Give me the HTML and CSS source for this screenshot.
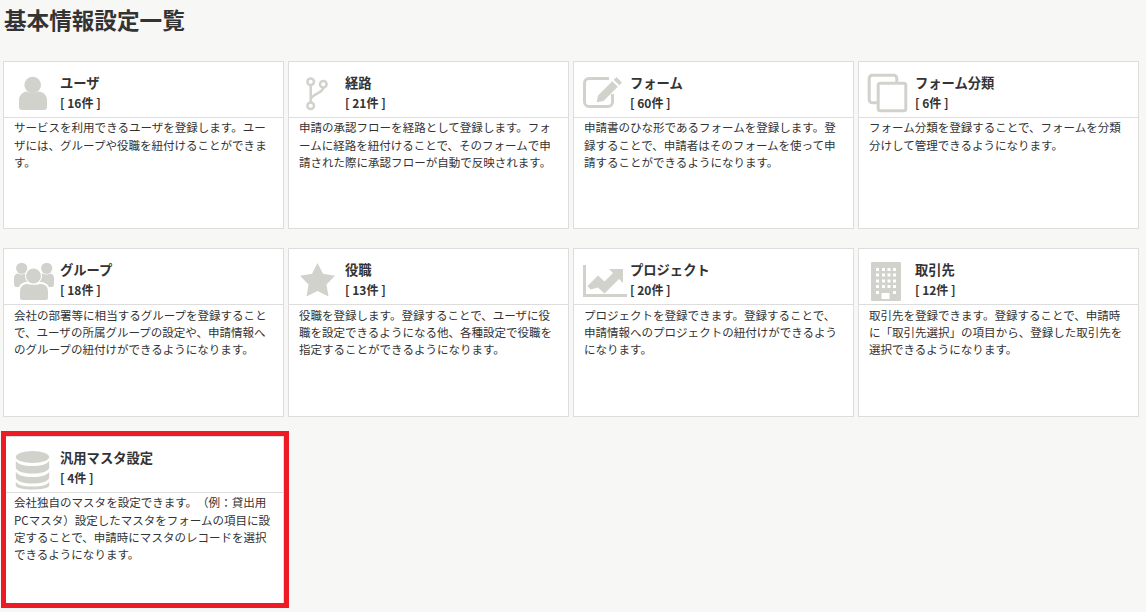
FILE: index.html
```html
<!DOCTYPE html>
<html lang="ja">
<head>
<meta charset="utf-8">
<title>基本情報設定一覧</title>
<link rel="stylesheet" href="styles.css">
</head>
<body>
<main class="page">
  <h1 class="page-title">基本情報設定一覧</h1>
  <div class="grid">
    <section class="card">
      <header class="card-head">
        <svg class="icon" viewBox="0 0 48 44"><circle cx="21.700" cy="12" r="8.300"/><path d="M8 34V27c0-5 4-8 8-8.500 3 1.700 8 1.700 11.500 0 4.500.5 8.500 3.500 8.500 8.500v7c0 2-1 3-3 3H11c-2 0-3-1-3-3z"/></svg>
        <div class="head-text"><h2 class="card-title">ユーザ</h2><p class="card-count">[ 16件 ]</p></div>
      </header>
      <p class="card-body">サービスを利用できるユーザを登録します。ユーザには、グループや役職を紐付けることができます。</p>
    </section>
    <section class="card">
      <header class="card-head">
        <svg class="icon line" viewBox="0 0 48 44"><circle cx="14.700" cy="8.700" r="3.300"/><circle cx="27.300" cy="11.300" r="3.300"/><circle cx="14.700" cy="32.700" r="3.300"/><path d="M14.700 12v17.400M27.300 14.600c0 6-12.600 6-12.600 12.400"/></svg>
        <div class="head-text"><h2 class="card-title">経路</h2><p class="card-count">[ 21件 ]</p></div>
      </header>
      <p class="card-body">申請の承認フローを経路として登録します。フォームに経路を紐付けることで、そのフォームで申請された際に承認フローが自動で反映されます。</p>
    </section>
    <section class="card">
      <header class="card-head">
        <svg class="icon" viewBox="0 0 48 44"><path class="stroke" d="M28 5.500H8a4.500 4.500 0 0 0-4.500 4.500v19A4.500 4.500 0 0 0 8 33.500h19a4.500 4.500 0 0 0 4.500-4.500V21"/><path d="M35.500 4l5.500 5.500-2.800 2.800-5.500-5.500zM31.300 8.200l5.500 5.500-14.300 14.300-6.800 1.300 1.300-6.800z"/></svg>
        <div class="head-text"><h2 class="card-title">フォーム</h2><p class="card-count">[ 60件 ]</p></div>
      </header>
      <p class="card-body">申請書のひな形であるフォームを登録します。登録することで、申請者はそのフォームを使って申請することができるようになります。</p>
    </section>
    <section class="card">
      <header class="card-head">
        <svg class="icon" viewBox="0 0 48 44"><rect class="stroke" x="3.200" y="2.200" width="27.600" height="27.600" rx="3"/><rect class="stroke front" x="12.200" y="10.200" width="27.600" height="27.600" rx="2"/></svg>
        <div class="head-text"><h2 class="card-title">フォーム分類</h2><p class="card-count">[ 6件 ]</p></div>
      </header>
      <p class="card-body">フォーム分類を登録することで、フォームを分類分けして管理できるようになります。</p>
    </section>
    <section class="card">
      <header class="card-head">
        <svg class="icon" viewBox="0 0 48 44"><circle cx="10.700" cy="8.300" r="5.600"/><circle cx="35.700" cy="8.300" r="5.600"/><path d="M3 24v-6c0-3 2-4.500 4-4.500 2 1.200 5 1.200 7 0h18c2 1.200 5 1.200 7 0 2 0 4 1.500 4 4.500v6c0 2-1 3-2 3H5c-1 0-2-1-2-3z"/><g class="halo"><circle cx="22.500" cy="16" r="7.500"/><path d="M8 38V31c0-5 4-8 8-8.300 3 1.500 9 1.500 13 0 5 .3 9 3.300 9 8.300v7c0 2-1 3-3 3H11c-2 0-3-1-3-3z"/></g><circle cx="22.500" cy="16" r="7.500"/></svg>
        <div class="head-text"><h2 class="card-title">グループ</h2><p class="card-count">[ 18件 ]</p></div>
      </header>
      <p class="card-body">会社の部署等に相当するグループを登録することで、ユーザの所属グループの設定や、申請情報へのグループの紐付けができるようになります。</p>
    </section>
    <section class="card">
      <header class="card-head">
        <svg class="icon" viewBox="0 0 48 44"><path d="M21.500 3l5.500 10.800 12 2-8.500 8.700 2 12-11-5.600-11 5.600 2-12L4 15.800l12-2z"/></svg>
        <div class="head-text"><h2 class="card-title">役職</h2><p class="card-count">[ 13件 ]</p></div>
      </header>
      <p class="card-body">役職を登録します。登録することで、ユーザに役職を設定できるようになる他、各種設定で役職を指定することができるようになります。</p>
    </section>
    <section class="card">
      <header class="card-head">
        <svg class="icon" viewBox="0 0 48 44"><path d="M2 5h3v29h41v3H2z"/><path d="M9.500 29.500l-3-3.500L17 15.500l6.500 6L32 13l-4-4h14v14l-4-4-14.500 14.500-6.500-6z"/></svg>
        <div class="head-text"><h2 class="card-title">プロジェクト</h2><p class="card-count">[ 20件 ]</p></div>
      </header>
      <p class="card-body">プロジェクトを登録できます。登録することで、申請情報へのプロジェクトの紐付けができるようになります。</p>
    </section>
    <section class="card">
      <header class="card-head">
        <svg class="icon" viewBox="0 0 48 44"><path fill-rule="evenodd" d="M6 2h28a1 1 0 0 1 1 1v37a1 1 0 0 1-1 1H6a1 1 0 0 1-1-1V3a1 1 0 0 1 1-1zM10 8v3h3V8zM16 8v3h3V8zM21.500 8v3h3V8zM27 8v3h3V8zM10 13.500v3h3v-3zM16 13.500v3h3v-3zM21.500 13.500v3h3v-3zM27 13.500v3h3v-3zM10 19.500v3h3v-3zM16 19.500v3h3v-3zM21.500 19.500v3h3v-3zM27 19.500v3h3v-3zM10 25v3h3v-3zM16 25v3h3v-3zM21.500 25v3h3v-3zM27 25v3h3v-3zM10 31v3h3v-3zM27 31v3h3v-3zM15.500 33v6h8v-6z"/></svg>
        <div class="head-text"><h2 class="card-title">取引先</h2><p class="card-count">[ 12件 ]</p></div>
      </header>
      <p class="card-body">取引先を登録できます。登録することで、申請時に「取引先選択」の項目から、登録した取引先を選択できるようになります。</p>
    </section>
    <section class="card">
      <header class="card-head">
        <svg class="icon" viewBox="0 0 48 44"><ellipse cx="21.500" cy="9" rx="16.700" ry="6"/><path d="M4.800 12.500c2 4 8 5.500 16.700 5.500s14.700-1.500 16.700-5.500V20c-2 4-8 5.500-16.700 5.500S6.800 24 4.800 20zM4.800 23.500c2 4 8 5.500 16.700 5.500s14.700-1.500 16.700-5.500V30c-2 4-8 5.500-16.700 5.500S6.800 34 4.800 30zM4.800 33.500c2 4 8 5 16.700 5s14.700-1 16.700-5V38c-1 2-8 3.500-16.700 3.500S5.800 40 4.800 38z"/></svg>
        <div class="head-text"><h2 class="card-title">汎用マスタ設定</h2><p class="card-count">[ 4件 ]</p></div>
      </header>
      <p class="card-body">会社独自のマスタを設定できます。（例：貸出用PCマスタ）設定したマスタをフォームの項目に設定することで、申請時にマスタのレコードを選択できるようになります。</p>
      <div class="highlight"></div>
    </section>
  </div>
</main>
</body>
</html>
```
FILE: styles.css
```css
* { box-sizing: border-box; }
html, body { margin: 0; height: 100%; }
body {
  background: #f7f7f5;
  color: #333;
  font-family: "Noto Sans CJK JP", "Noto Sans", sans-serif;
  overflow: hidden;
  text-spacing-trim: space-all;
}
.page { padding: 3px 7px 0 3px; }
.page-title {
  margin: 0 0 24.900px 1px;
  font-size: 22.600px;
  line-height: 33px;
  font-weight: 700;
  color: #333;
}
.grid {
  display: grid;
  grid-template-columns: repeat(4, 281.400px);
  grid-auto-rows: 168.500px;
  column-gap: 3.600px;
  row-gap: 19px;
}
.card {
  position: relative;
  background: #fff;
  border: 1px solid #ddd;
}
.card-head {
  display: flex;
  height: 56px;
  padding: 11px 0 0 7px;
  border-bottom: 1px solid #ddd;
}
.icon {
  flex: none;
  width: 48px;
  height: 44px;
  margin-right: 1px;
  fill: #d2d2cd;
}
.icon.line {
  fill: none;
  stroke: #d2d2cd;
  stroke-width: 2.500;
}
.stroke {
  fill: none;
  stroke: #d2d2cd;
  stroke-width: 3;
}
.stroke.front { fill: #fff; }
.halo {
  stroke: #fff;
  stroke-width: 2;
}
.head-text { padding-top: 0; }
.card-title {
  margin: 0;
  font-size: 13.300px;
  line-height: 20px;
  font-weight: 700;
}
.card-count {
  margin: 0;
  font-size: 12px;
  line-height: 20px;
  font-weight: 700;
}
.card-body {
  margin: 0;
  padding: 1.500px 11px 0 10px;
  font-size: 11.520px;
  line-height: 17.300px;
}
.highlight {
  position: absolute;
  left: -3px;
  top: -6px;
  width: 288px;
  height: 177.500px;
  border: 5px solid #ed1c24;
  pointer-events: none;
}
```
